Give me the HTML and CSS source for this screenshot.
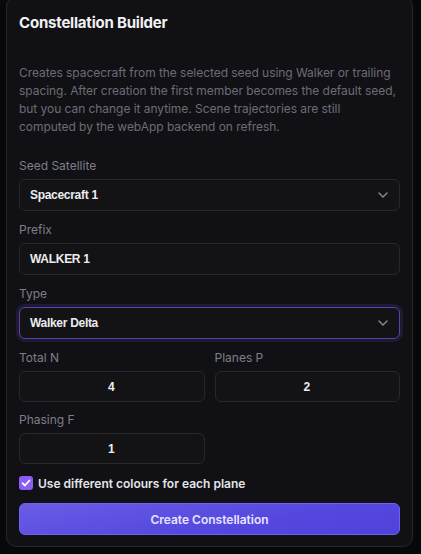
FILE: index.html
```html
<!DOCTYPE html>
<html lang="en">
<head>
<meta charset="utf-8">
<title>Constellation Builder</title>
<link rel="stylesheet" href="styles.css">
</head>
<body>
<section class="card">
  <h2 class="title">Constellation Builder</h2>
  <p class="desc">Creates spacecraft from the selected seed using Walker or trailing spacing. After creation the first member becomes the default seed, but you can change it anytime. Scene trajectories are still computed by the webApp backend on refresh.</p>

  <div class="form">
    <div class="field">
      <label class="label">Seed Satellite</label>
      <div class="control select">
        <span class="value">Spacecraft 1</span>
        <svg class="chev" width="10" height="6" viewBox="0 0 10 6"><path d="M1 1l4 4 4-4" fill="none" stroke="#8a8a93" stroke-width="1.4" stroke-linecap="round" stroke-linejoin="round"/></svg>
      </div>
    </div>

    <div class="field">
      <label class="label">Prefix</label>
      <div class="control"><span class="value">WALKER 1</span></div>
    </div>

    <div class="field">
      <label class="label">Type</label>
      <div class="control select focus">
        <span class="value">Walker Delta</span>
        <svg class="chev" width="10" height="6" viewBox="0 0 10 6"><path d="M1 1l4 4 4-4" fill="none" stroke="#8a8a93" stroke-width="1.4" stroke-linecap="round" stroke-linejoin="round"/></svg>
      </div>
    </div>

    <div class="row">
      <div class="field">
        <label class="label">Total N</label>
        <div class="control num"><span class="value">4</span></div>
      </div>
      <div class="field">
        <label class="label">Planes P</label>
        <div class="control num"><span class="value">2</span></div>
      </div>
    </div>

    <div class="row row-tight">
      <div class="field">
        <label class="label">Phasing F</label>
        <div class="control num"><span class="value">1</span></div>
      </div>
      <div></div>
    </div>

    <label class="check">
      <span class="box"><svg width="10" height="10" viewBox="0 0 10 10"><path d="M1.6 5.2l2.3 2.3 4.5-5" fill="none" stroke="#fff" stroke-width="1.8" stroke-linecap="round" stroke-linejoin="round"/></svg></span>
      <span class="check-text">Use different colours for each plane</span>
    </label>

    <button class="btn">Create Constellation</button>
  </div>
</section>
</body>
</html>
```
FILE: styles.css
```css
html, body {
  margin: 0;
  padding: 0;
  background: #08080a;
}
body {
  font-family: Inter, "Noto Sans", "Liberation Sans", sans-serif;
  color: #e6e6ea;
  width: 421px;
  height: 554px;
  overflow: hidden;
}
.card {
  box-sizing: border-box;
  margin: -4px 8px 0 6px;
  padding: 16px 12px 11px 12px;
  background: #111115;
  border: 1px solid #26262b;
  border-radius: 10px;
}
.title {
  margin: 0;
  font-size: 15px;
  line-height: 20px;
  font-weight: 700;
  color: #f2f2f4;
  letter-spacing: -0.2px;
}
.desc {
  margin: 31px 0 0 0;
  font-size: 12px;
  line-height: 18px;
  color: #6c6c76;
  letter-spacing: -0.05px;
}
.form {
  margin-top: 21px;
  display: flex;
  flex-direction: column;
  gap: 10px;
}
.field {
  display: flex;
  flex-direction: column;
  gap: 4px;
  min-width: 0;
}
.label {
  font-size: 12px;
  line-height: 18px;
  color: #7e7e88;
}
.control {
  box-sizing: border-box;
  height: 32px;
  display: flex;
  align-items: center;
  padding: 0 11px 0 10px;
  background: #131316;
  border: 1px solid #27272c;
  border-radius: 6px;
}
.value {
  font-family: "Liberation Sans", Arial, sans-serif;
  font-size: 12px;
  font-weight: 700;
  color: #ececef;
  letter-spacing: -0.3px;
}
.select {
  justify-content: space-between;
}
.focus {
  border-color: #5b3fb8;
  box-shadow: 0 0 0 3px #1f1a30;
}
.row {
  display: grid;
  grid-template-columns: 1fr 1fr;
  gap: 10px;
}
.row-tight {
  margin-top: -1px;
}
.num {
  height: 31px;
  justify-content: center;
}
.check {
  display: flex;
  align-items: center;
  gap: 5px;
  height: 18px;
}
.box {
  width: 14px;
  height: 14px;
  border-radius: 3px;
  background: #8b5cf6;
  display: flex;
  align-items: center;
  justify-content: center;
}
.check-text {
  font-size: 12px;
  font-weight: 600;
  color: #e4e4e8;
}
.btn {
  margin-top: 1px;
  height: 32px;
  border: 1px solid #6f63ea;
  border-radius: 6px;
  background: linear-gradient(170deg, #6a5ce6 0%, #5448df 60%, #4e42dc 100%);
  color: #e6e4ff;
  font-family: inherit;
  font-size: 12px;
  font-weight: 600;
}
```
